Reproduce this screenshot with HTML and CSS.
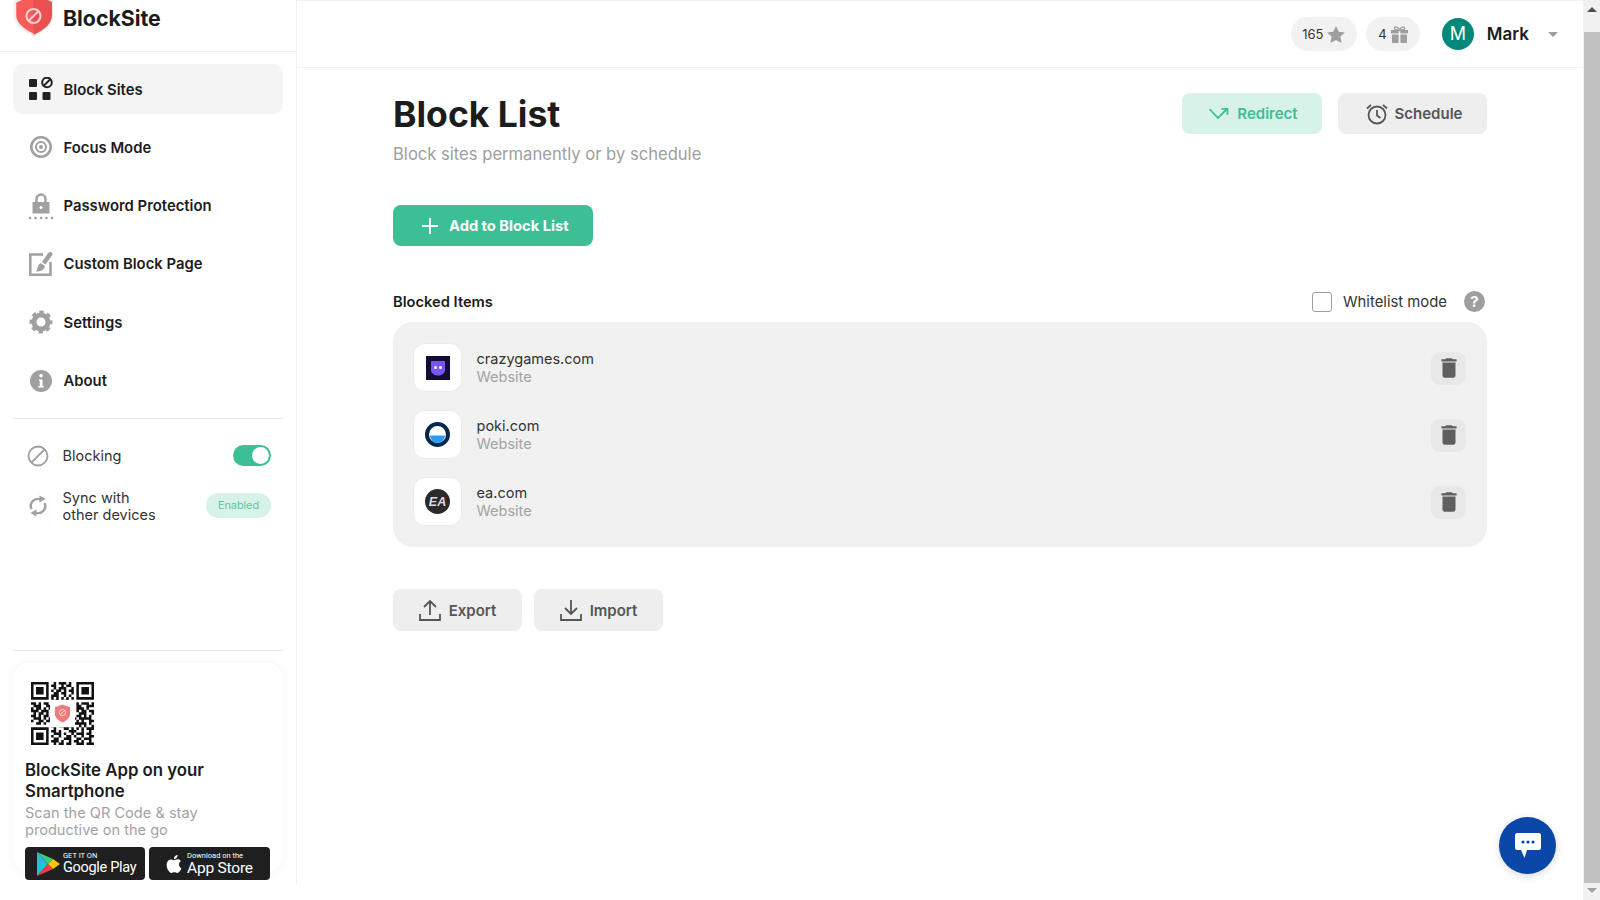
FILE: index.html
```html
<!DOCTYPE html>
<html lang="en">
<head>
<meta charset="utf-8">
<title>BlockSite</title>
<link rel="stylesheet" href="styles.css">
</head>
<body>
<div class="app">
  <aside class="sidebar">
    <div class="brand">
      <svg class="brand-logo" width="42" height="38" viewBox="0 0 42 38"><path d="M21.500-7 40 2v13c0 9-8 15-18.500 20C11 30 3 24 3 15V2z" fill="#f95a5a" stroke="#eeeeee" stroke-width="2.500"/><path d="M21.500-7 40 2v13c0 9-8 15-18.500 20z" fill="#ea5050"/><circle cx="21.500" cy="16" r="7" fill="none" stroke="#fbd2d2" stroke-width="2"/><path d="m16.500 21 10-10" stroke="#fbd2d2" stroke-width="2"/></svg>
      <span class="brand-name">BlockSite</span>
    </div>
    <nav class="nav">
      <a class="nav-item active">
        <svg class="nav-icon" width="24" height="24" viewBox="0 0 24 24"><g fill="#222"><rect x="0" y="2" width="8" height="8" rx="1"/><rect x="0" y="15" width="8" height="8" rx="1"/><rect x="13.500" y="15" width="8" height="8" rx="1"/></g><circle cx="18" cy="5.500" r="4.800" fill="none" stroke="#222" stroke-width="2"/><path d="m14.500 9 7-7" stroke="#222" stroke-width="2"/></svg>
        Block Sites</a>
      <a class="nav-item">
        <svg class="nav-icon" width="24" height="24" viewBox="0 0 24 24"><g fill="none" stroke="#a0a0a0"><circle cx="12" cy="12" r="9.700" stroke-width="2.600"/><circle cx="12" cy="12" r="5" stroke-width="2"/></g><circle cx="12" cy="12" r="2" fill="#a0a0a0"/></svg>
        Focus Mode</a>
      <a class="nav-item">
        <svg class="nav-icon" width="26" height="28" viewBox="0 0 26 28"><path d="M8.500 10V7a4.500 4.500 0 0 1 9 0v3" fill="none" stroke="#a0a0a0" stroke-width="2.500"/><path d="M4.500 10h17v11.500h-17z" fill="#a0a0a0"/><circle cx="13" cy="15.500" r="1.500" fill="#fff"/><g fill="#a0a0a0"><circle cx="2" cy="26" r="1.300"/><circle cx="7.500" cy="26" r="1.300"/><circle cx="13" cy="26" r="1.300"/><circle cx="18.500" cy="26" r="1.300"/><circle cx="24" cy="26" r="1.300"/></g></svg>
        Password Protection</a>
      <a class="nav-item">
        <svg class="nav-icon" width="24" height="24" viewBox="0 0 24 24"><path d="M14 2.500H1.300v20.200h20.200V10" fill="none" stroke="#a0a0a0" stroke-width="2.500"/><path d="M21 0c2 0 3 1.500 2.300 3L16.500 12.500l-3.500-2.500L19 1z" fill="#a0a0a0"/><path d="M11.500 11l4.500 3c-.5 3.500-3.500 5.500-9 5.500 1.500-1.500 1-6.500 4.500-8.500z" fill="#a0a0a0"/></svg>
        Custom Block Page</a>
      <a class="nav-item">
        <svg class="nav-icon" width="24" height="24" viewBox="0 0 24 24"><circle cx="12" cy="12" r="7" fill="none" stroke="#a0a0a0" stroke-width="5"/><circle cx="12" cy="12" r="9.800" fill="none" stroke="#a0a0a0" stroke-width="3.400" stroke-dasharray="4.200 3.500" stroke-dashoffset="2"/></svg>
        Settings</a>
      <a class="nav-item">
        <svg class="nav-icon" width="24" height="24" viewBox="0 0 24 24"><circle cx="12" cy="12" r="11" fill="#a0a0a0"/><circle cx="12" cy="6.800" r="1.800" fill="#fff"/><path d="M10 10.500h3.500V17h1.200v1.500H9.500V17h1.200v-5H10z" fill="#fff"/></svg>
        About</a>
    </nav>
    <hr class="rule">
    <div class="status-row blocking-row">
      <svg class="status-icon" width="22" height="22" viewBox="0 0 22 22"><circle cx="11" cy="11" r="9.500" fill="none" stroke="#a0a0a0" stroke-width="1.800"/><path d="m4.500 17.500 13-13" stroke="#a0a0a0" stroke-width="1.800"/></svg>
      <span class="status-label">Blocking</span>
      <span class="switch"><span class="switch-knob"></span></span>
    </div>
    <div class="status-row sync-row">
      <svg class="status-icon" width="22" height="22" viewBox="0 0 22 22"><g fill="none" stroke="#a0a0a0" stroke-width="2.400"><path d="M4.500 14a7 7 0 0 1 9-9.500"/><path d="M17.500 8a7 7 0 0 1-9 9.500"/></g><path d="M12.500.5l6 3.500-6 3.500zM9.500 21.500l-6-3.500 6-3.500z" fill="#a0a0a0"/></svg>
      <span class="status-label">Sync with<br>other devices</span>
      <span class="enabled">Enabled</span>
    </div>
    <div class="sidebar-bottom">
      <hr class="rule">
      <section class="app-card">
        <div class="qr">
          <svg width="63" height="63" viewBox="0 0 25 25" shape-rendering="geometricPrecision"><path fill="none" stroke="#111" stroke-width="1" d="M0 .5h7M9 .5h1M11 .5h3M15 .5h1M18 .5h7M0 1.500h1M6 1.500h1M8 1.500h2M12 1.500h1M14 1.500h2M18 1.500h1M24 1.500h1M0 2.500h1M2 2.500h3M6 2.500h1M9 2.500h1M11 2.500h3M16 2.500h1M18 2.500h1M20 2.500h3M24 2.500h1M0 3.500h1M2 3.500h3M6 3.500h1M8 3.500h1M10 3.500h2M13 3.500h1M15 3.500h2M18 3.500h1M20 3.500h3M24 3.500h1M0 4.500h1M2 4.500h3M6 4.500h1M9 4.500h2M12 4.500h2M16 4.500h1M18 4.500h1M20 4.500h3M24 4.500h1M0 5.500h1M6 5.500h1M8 5.500h3M13 5.500h1M15 5.500h1M18 5.500h1M24 5.500h1M0 6.500h7M8 6.500h1M10 6.500h1M12 6.500h1M14 6.500h1M16 6.500h1M18 6.500h7M9 7.500h2M13 7.500h2M0 8.500h2M3 8.500h1M5 8.500h2M8 8.500h2M12 8.500h1M15 8.500h2M18 8.500h1M20 8.500h3M24 8.500h1M1 9.500h3M6 9.500h2M16 9.500h1M18 9.500h2M22 9.500h3M0 10.500h1M2 10.500h2M5 10.500h1M7 10.500h1M18 10.500h3M22 10.500h1M0 11.500h3M4 11.500h3M18 11.500h1M20 11.500h2M23 11.500h2M1 12.500h1M3 12.500h2M6 12.500h1M19 12.500h3M24 12.500h1M0 13.500h2M3 13.500h1M5 13.500h2M18 13.500h2M21 13.500h1M23 13.500h1M1 14.500h3M5 14.500h1M7 14.500h1M17 14.500h1M19 14.500h3M22 14.500h2M0 15.500h1M3 15.500h2M6 15.500h2M18 15.500h1M20 15.500h1M23 15.500h2M2 16.500h2M5 16.500h1M8 16.500h2M12 16.500h1M14 16.500h2M17 16.500h5M23 16.500h1M8 17.500h1M11 17.500h2M15 17.500h1M19 17.500h1M21 17.500h1M24 17.500h1M0 18.500h7M9 18.500h1M13 18.500h2M16 18.500h1M18 18.500h1M20 18.500h1M22 18.500h3M0 19.500h1M6 19.500h1M8 19.500h2M11 19.500h1M15 19.500h3M20 19.500h1M23 19.500h1M0 20.500h1M2 20.500h3M6 20.500h1M9 20.500h3M13 20.500h1M16 20.500h1M18 20.500h3M22 20.500h2M0 21.500h1M2 21.500h3M6 21.500h1M8 21.500h1M11 21.500h1M14 21.500h2M17 21.500h1M20 21.500h1M23 21.500h2M0 22.500h1M2 22.500h3M6 22.500h1M9 22.500h2M13 22.500h3M18 22.500h2M21 22.500h3M0 23.500h1M6 23.500h1M8 23.500h3M12 23.500h1M15 23.500h1M17 23.500h2M20 23.500h1M23 23.500h1M0 24.500h7M9 24.500h1M11 24.500h2M14 24.500h2M18 24.500h3M22 24.500h3"/></svg>
          <svg class="qr-logo" width="17" height="19" viewBox="0 0 19 21"><path d="M9.500 .5 18 3.500v7c0 5-4 8-8.500 10C5 18.500 1 15.500 1 10.500v-7z" fill="#ee7a7a"/><circle cx="9.500" cy="9.500" r="3.500" fill="none" stroke="#fde3e3" stroke-width="1"/><path d="m7 12 5-5" stroke="#fde3e3"/></svg>
        </div>
        <h2 class="app-title">BlockSite App on your Smartphone</h2>
        <p class="app-sub">Scan the QR Code &amp; stay productive on the go</p>
        <div class="stores">
          <div class="store store-google">
            <svg width="24" height="24" viewBox="0 0 24 24"><path d="M1 0v12h11z" fill="#2fb6e8"/><path d="M1 24V12h11z" fill="#18c9d0"/><path d="M1 0 12 12l5-5z" fill="#37cf77"/><path d="M1 24 12 12l5 5z" fill="#ec3d4b"/><path d="m17 7 7 5-7 5-5-5z" fill="#fcc50c"/></svg>
            <div class="store-text"><span class="store-small">GET IT ON</span><span class="store-big">Google Play</span></div>
          </div>
          <div class="store store-apple">
            <svg width="18" height="20" viewBox="0 0 24 24"><path fill="#fff" d="M12.152 6.896c-.948 0-2.415-1.078-3.96-1.04-2.04.027-3.91 1.183-4.961 3.014-2.117 3.675-.546 9.103 1.519 12.09 1.013 1.454 2.208 3.09 3.792 3.039 1.52-.065 2.09-.987 3.935-.987 1.831 0 2.35.987 3.96.948 1.637-.026 2.676-1.48 3.676-2.948 1.156-1.688 1.636-3.325 1.662-3.415-.039-.013-3.182-1.221-3.22-4.857-.026-3.04 2.48-4.494 2.597-4.559-1.429-2.09-3.623-2.324-4.39-2.376-2-.156-3.675 1.09-4.61 1.09zM15.53 3.83c.843-1.012 1.4-2.427 1.245-3.83-1.207.052-2.662.805-3.532 1.818-.78.896-1.454 2.338-1.273 3.714 1.338.104 2.715-.688 3.559-1.701"/></svg>
            <div class="store-text"><span class="store-small">Download on the</span><span class="store-big">App Store</span></div>
          </div>
        </div>
      </section>
    </div>
  </aside>

  <div class="main">
    <header class="topbar">
      <div class="pill pill-stars">165
        <svg width="18" height="17" viewBox="0 0 24 23"><path d="m12 0 3.700 7.800 8.300 1-6.100 5.900 1.600 8.300-7.500-4.200L4.500 23l1.600-8.300L0 8.800l8.300-1z" fill="#9e9e9e"/></svg>
      </div>
      <div class="pill pill-gift">4
        <svg width="17" height="17" viewBox="0 0 17 17"><g fill="#9e9e9e"><rect x="0" y="4" width="7.600" height="3.400"/><rect x="9.400" y="4" width="7.600" height="3.400"/><rect x="1" y="8.500" width="6.600" height="8.500" rx=".8"/><rect x="9.400" y="8.500" width="6.600" height="8.500" rx=".8"/></g><path d="M8.500 4C7 .5 3.500 .2 3.500 2.200S6 4 8.500 4c2.500 0 5 .2 5-1.800S10 .5 8.500 4z" fill="none" stroke="#9e9e9e" stroke-width="1.300"/></svg>
      </div>
      <div class="avatar">M</div>
      <span class="user-name">Mark</span>
      <span class="caret"></span>
    </header>

    <main class="content">
      <div class="page-head">
        <div>
          <h1 class="page-title">Block List</h1>
          <p class="page-sub">Block sites permanently or by schedule</p>
        </div>
        <div class="head-actions">
          <button class="btn btn-mint">
            <svg width="20" height="12" viewBox="0 0 20 12"><path d="M.5 1 9 10l9-9M12.500 .8h6v6" fill="none" stroke="#3dbf95" stroke-width="1.800"/></svg>
            Redirect</button>
          <button class="btn btn-grey btn-schedule">
            <svg width="22" height="22" viewBox="0 0 22 22"><g fill="none" stroke="#555" stroke-width="1.800"><circle cx="11" cy="12" r="8.500"/><path d="M11 7v5.500l3.500 2.500M1 5.500 5 1.800M21 5.500 17 1.800"/></g></svg>
            Schedule</button>
        </div>
      </div>

      <button class="btn-add">
        <svg width="16" height="16" viewBox="0 0 16 16"><path d="M8 0v16M0 8h16" stroke="#fff" stroke-width="1.800"/></svg>
        Add to Block List</button>

      <div class="list-head">
        <span class="list-title">Blocked Items</span>
        <label class="whitelist"><span class="checkbox"></span>Whitelist mode</label>
        <span class="help">?</span>
      </div>

      <section class="list">
        <div class="site">
          <div class="site-icon">
            <svg width="24" height="24" viewBox="0 0 24 24"><rect width="24" height="24" fill="#130d35"/><path d="M5 6c0-.6.4-1 1-1h12c.6 0 1 .4 1 1v8c0 3.500-3.500 5.500-7 5.500S5 17.500 5 14z" fill="#7a55f5"/><circle cx="9.500" cy="11.500" r="1.500" fill="#fff"/><circle cx="14.500" cy="11.500" r="1.500" fill="#fff"/></svg>
          </div>
          <div class="site-text"><span class="site-name">crazygames.com</span><span class="site-type">Website</span></div>
          <button class="trash"><svg width="26" height="26" viewBox="0 0 24 24"><path fill="#5f5f5f" d="M6 19c0 1.100.9 2 2 2h8c1.100 0 2-.9 2-2V7H6v12zM19 4h-3.500l-1-1h-5l-1 1H5v2h14V4z"/></svg></button>
        </div>
        <div class="site">
          <div class="site-icon">
            <svg width="25" height="25" viewBox="0 0 25 25"><circle cx="12.500" cy="12.500" r="10.500" fill="#fff" stroke="#04264f" stroke-width="4"/><path d="M5 13.500h15a7.500 7.500 0 0 1-15 0z" fill="#2b9bf0"/></svg>
          </div>
          <div class="site-text"><span class="site-name">poki.com</span><span class="site-type">Website</span></div>
          <button class="trash"><svg width="26" height="26" viewBox="0 0 24 24"><path fill="#5f5f5f" d="M6 19c0 1.100.9 2 2 2h8c1.100 0 2-.9 2-2V7H6v12zM19 4h-3.500l-1-1h-5l-1 1H5v2h14V4z"/></svg></button>
        </div>
        <div class="site">
          <div class="site-icon">
            <svg width="25" height="25" viewBox="0 0 25 25"><circle cx="12.500" cy="12.500" r="12.500" fill="#2a2a2a"/><text x="12.500" y="16.500" class="ea-mark" text-anchor="middle">EA</text></svg>
          </div>
          <div class="site-text"><span class="site-name">ea.com</span><span class="site-type">Website</span></div>
          <button class="trash"><svg width="26" height="26" viewBox="0 0 24 24"><path fill="#5f5f5f" d="M6 19c0 1.100.9 2 2 2h8c1.100 0 2-.9 2-2V7H6v12zM19 4h-3.500l-1-1h-5l-1 1H5v2h14V4z"/></svg></button>
        </div>
      </section>

      <div class="transfer">
        <button class="btn btn-grey btn-transfer">
          <svg width="22" height="22" viewBox="0 0 22 22"><path d="M11 16V2M5 8l6-6 6 6M1 15v6h20v-6" fill="none" stroke="#555" stroke-width="1.800"/></svg>
          Export</button>
        <button class="btn btn-grey btn-transfer">
          <svg width="22" height="22" viewBox="0 0 22 22"><path d="M11 1v14M5 9l6 6 6-6M1 15v6h20v-6" fill="none" stroke="#555" stroke-width="1.800"/></svg>
          Import</button>
      </div>
    </main>
  </div>

  <div class="scrollbar">
    <span class="arrow arrow-up"><svg width="10" height="5" viewBox="0 0 10 5"><path d="M5 0l5 5H0z" fill="#505050"/></svg></span>
    <span class="thumb"></span>
    <span class="arrow arrow-down"><svg width="10" height="5" viewBox="0 0 10 5"><path d="M0 0h10L5 5z" fill="#a0a0a0"/></svg></span>
  </div>
</div>

<button class="chat">
  <svg width="26" height="25" viewBox="0 0 26 25"><path d="M2 0h22c1 0 2 1 2 2v13c0 1-1 2-2 2H12l-2.500 8L6 17H2c-1 0-2-1-2-2V2C0 1 1 0 2 0z" fill="#fff"/><g fill="#0a47a9"><circle cx="8" cy="9" r="1.600"/><circle cx="13" cy="9" r="1.600"/><circle cx="18" cy="9" r="1.600"/></g></svg>
</button>
</body>
</html>
```

FILE: styles.css
```css
* { box-sizing: border-box; }

html, body {
  margin: 0;
  height: 900px;
  overflow: hidden;
  background: #fff;
  font-family: Inter, "Liberation Sans", sans-serif;
  color: #1c1c1c;
}

h1, h2, p { margin: 0; }

button {
  font-family: inherit;
  border: 0;
  cursor: pointer;
}

.app {
  display: flex;
  height: 900px;
}

/* Sidebar */
.sidebar {
  flex: 0 0 297px;
  height: 885px;
  display: flex;
  flex-direction: column;
  border-right: 1px solid #f0f0f0;
}

.brand {
  flex: 0 0 52px;
  display: flex;
  align-items: flex-start;
  gap: 9px;
  padding-left: 12px;
  border-bottom: 1px solid #f0f0f0;
}

.brand-name {
  font-size: 21.3px;
  line-height: 36px;
  font-weight: 700;
  color: #1c1c1c;
}

.nav {
  display: flex;
  flex-direction: column;
  gap: 8.33px;
  padding: 12px 13px 0;
}

.nav-item {
  position: relative;
  display: flex;
  align-items: center;
  height: 50px;
  padding: 1px 0 0 50.5px;
  font-size: 14.85px;
  font-weight: 600;
  border-radius: 10px;
  color: #1c1c1c;
}

.nav-item.active { background: #f4f4f4; }

.nav-icon {
  position: absolute;
  left: 27.5px;
  top: 50%;
  transform: translate(-50%, -50%);
}

.rule {
  margin: 12px 13px 0;
  border: 0;
  border-top: 1px solid #e8e8e8;
  height: 0;
}

.status-row {
  display: flex;
  align-items: center;
  padding: 0 25px 0 27px;
  font-size: 14.5px;
}

.blocking-row { margin-top: 25px; height: 24px; }
.sync-row { margin-top: 20px; height: 36px; }

.status-label {
  margin-left: 13.5px;
  line-height: 17px;
  color: #333;
}

.switch {
  margin-left: auto;
  width: 38px;
  height: 21px;
  padding: 2px;
  display: flex;
  justify-content: flex-end;
  border-radius: 11px;
  background: #3dbf95;
}

.switch-knob {
  width: 17px;
  height: 17px;
  border-radius: 50%;
  background: #fff;
}

.enabled {
  margin-left: auto;
  width: 65px;
  height: 25px;
  line-height: 25px;
  text-align: center;
  font-size: 10.8px;
  color: #5cc4a2;
  background: #d7f3e9;
  border-radius: 13px;
}

.sidebar-bottom { margin-top: auto; }

.app-card {
  height: 209px;
  margin: 12px 13px 13px;
  padding: 19px 12px 0;
  border-radius: 16px;
  box-shadow: 0 0 8px rgba(0, 0, 0, .05);
}

.qr {
  position: relative;
  width: 63px;
  height: 63px;
  margin-left: 6px;
}

.qr svg { display: block; }

.qr-logo {
  position: absolute;
  left: 23px;
  top: 22px;
  background: #fff;
  outline: 4px solid #fff;
}

.app-title {
  margin-top: 14.5px;
  font-size: 16.8px;
  line-height: 21px;
  font-weight: 600;
}

.app-sub {
  margin-top: 3.5px;
  font-size: 14.6px;
  line-height: 17px;
  color: #a3a3a3;
}

.stores {
  display: flex;
  gap: 4px;
  margin-top: 8px;
}

.store {
  width: 120px;
  height: 33px;
  display: flex;
  align-items: center;
  gap: 3px;
  background: #1f1f1f;
  border-radius: 4px;
  color: #fff;
  font-family: Roboto, "Liberation Sans", sans-serif;
  white-space: nowrap;
}

.store-google { padding-left: 11px; }
.store-apple { width: 121px; padding-left: 16px; gap: 4px; }

.store-text {
  display: flex;
  flex-direction: column;
}

.store-small {
  font-size: 7.5px;
  line-height: 9px;
}

.store-big {
  font-size: 15.5px;
  line-height: 16px;
  letter-spacing: -.2px;
}

.store-google .store-big {
  font-size: 14.5px;
  letter-spacing: -.3px;
}

/* Main */
.main {
  flex: 1;
  min-width: 0;
}

.topbar {
  height: 68px;
  display: flex;
  align-items: center;
  justify-content: flex-end;
  padding: 0 25px 0 0;
  border-top: 1px solid #f0f0f0;
  border-bottom: 1px solid #f2f2f2;
}

.pill {
  height: 34px;
  display: flex;
  align-items: center;
  justify-content: center;
  gap: 4px;
  border-radius: 17px;
  background: #f2f2f2;
  font-size: 13px;
  color: #333;
}

.pill-stars { width: 66px; }
.pill-gift { width: 54px; margin-left: 9px; }

.avatar {
  width: 32px;
  height: 32px;
  margin-left: 22px;
  border-radius: 50%;
  background: #00897b;
  color: #fff;
  font-size: 18px;
  line-height: 32px;
  text-align: center;
}

.user-name {
  margin-left: 13px;
  font-size: 17px;
  font-weight: 600;
}

.caret {
  margin-left: 19px;
  width: 0;
  height: 0;
  border-left: 5px solid transparent;
  border-right: 5px solid transparent;
  border-top: 5px solid #9e9e9e;
}

.content { padding: 25px 96px 0; }

.page-head {
  display: flex;
  justify-content: space-between;
}

.page-title {
  font-size: 35.5px;
  line-height: 44px;
  font-weight: 700;
}

.page-sub {
  margin-top: 5px;
  font-size: 16.6px;
  line-height: 25px;
  color: #9e9e9e;
}

.head-actions {
  display: flex;
  align-items: flex-start;
  gap: 16px;
}

.btn {
  height: 42px;
  display: flex;
  align-items: center;
  justify-content: center;
  gap: 8px;
  border-radius: 8px;
  font-size: 15px;
  font-weight: 600;
}

.head-actions .btn { height: 41px; }

.btn-mint {
  width: 140px;
  padding-left: 9px;
  background: #d7f3e9;
  color: #3dbf95;
}

.btn-grey {
  background: #eee;
  color: #555;
}

.head-actions .btn-schedule {
  width: 149px;
  padding-left: 9px;
  gap: 7px;
}

.btn-add {
  margin-top: 38px;
  width: 200px;
  height: 41px;
  display: flex;
  align-items: center;
  justify-content: flex-start;
  gap: 11px;
  padding: 0 0 0 29px;
  border-radius: 8px;
  background: #3dbf95;
  color: #fff;
  font-size: 14.7px;
  font-weight: 700;
}

.list-head {
  margin-top: 44.5px;
  height: 22px;
  display: flex;
  align-items: center;
}

.list-title {
  font-size: 14.7px;
  font-weight: 600;
}

.whitelist {
  margin-left: auto;
  display: flex;
  align-items: center;
  gap: 11px;
  font-size: 14.85px;
  color: #333;
}

.checkbox {
  width: 20px;
  height: 20px;
  border: 1.5px solid #9e9e9e;
  border-radius: 3px;
  background: #fff;
}

.help {
  width: 21px;
  height: 21px;
  margin: 0 2px 0 17px;
  border-radius: 50%;
  background: #9e9e9e;
  color: #fff;
  font-size: 15px;
  font-weight: 700;
  line-height: 21px;
  text-align: center;
}

.list {
  margin-top: 9.5px;
  padding: 21px 21px 21px 20px;
  display: flex;
  flex-direction: column;
  gap: 18px;
  background: #f1f1f1;
  border-radius: 20px;
}

.site {
  height: 49px;
  display: flex;
  align-items: center;
}

.site-icon {
  width: 49px;
  height: 49px;
  display: flex;
  align-items: center;
  justify-content: center;
  background: #fff;
  border: 1px solid #ebebeb;
  border-radius: 12px;
}

.ea-mark {
  font-family: "Liberation Sans", sans-serif;
  font-size: 12.5px;
  font-weight: 700;
  font-style: italic;
  fill: #dcdcdc;
}

.site-text {
  display: flex;
  flex-direction: column;
  margin-left: 14.5px;
  font-size: 14.5px;
  line-height: 18px;
}

.site-name { color: #333; }
.site-type { color: #a3a3a3; }

.trash {
  margin: 1px 0 0 auto;
  width: 35px;
  height: 33px;
  padding: 0;
  display: flex;
  align-items: center;
  justify-content: center;
  border-radius: 9px;
  background: #e8e8e8;
}

.transfer {
  margin-top: 42px;
  display: flex;
  gap: 12px;
}

.btn-transfer {
  width: 129px;
  gap: 8px;
}

/* Scrollbar */
.scrollbar {
  flex: 0 0 17px;
  height: 900px;
  padding-left: 1px;
  display: flex;
  flex-direction: column;
  align-items: stretch;
  background: #f1f1f1;
}

.arrow {
  display: flex;
  justify-content: center;
}

.arrow-up {
  flex: 0 0 32px;
  padding-top: 7px;
}

.arrow-down {
  flex: 0 0 17px;
  padding-top: 5px;
}

.arrow svg { display: block; }

.thumb {
  flex: 1;
  background: #c1c1c1;
}

/* Chat launcher */
.chat {
  position: fixed;
  left: 1499px;
  top: 817px;
  width: 57px;
  height: 57px;
  padding: 0;
  display: flex;
  align-items: center;
  justify-content: center;
  border-radius: 50%;
  background: #0a47a9;
  box-shadow: 0 2px 8px rgba(0, 0, 0, .15);
}
```
